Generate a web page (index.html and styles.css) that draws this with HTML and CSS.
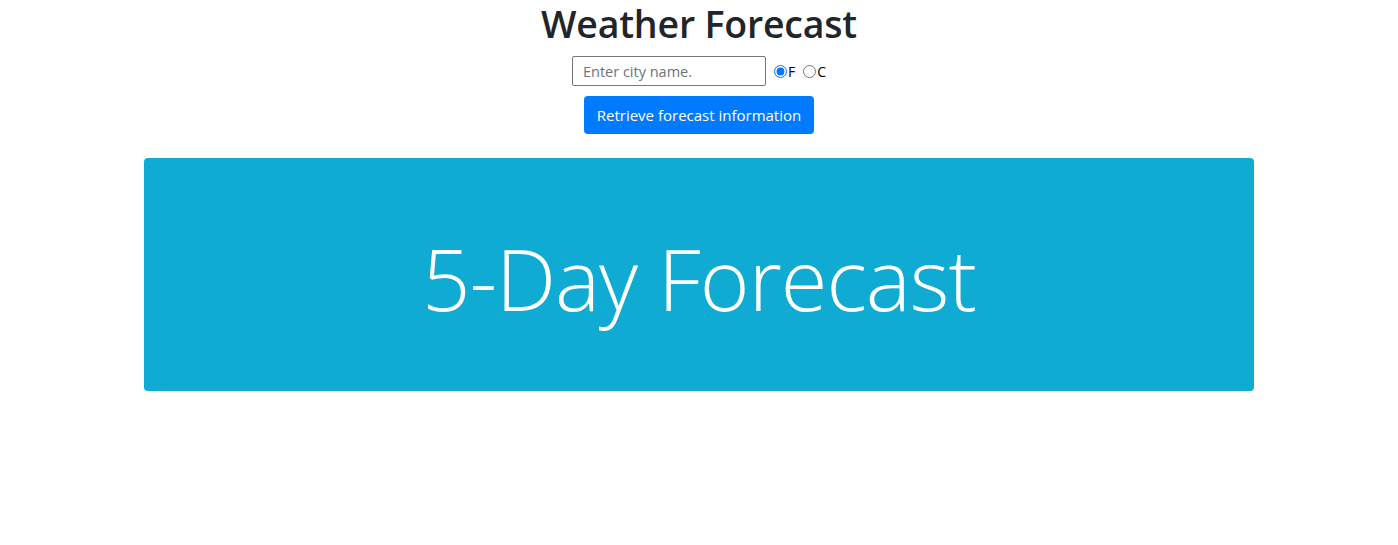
FILE: index.html
```html
<!DOCTYPE html>
<html>
<head>
<meta charset="utf-8">
<link rel="stylesheet" href="styles.css">
</head>
<body>
<div class="page">
  <h1 class="title">Weather Forecast</h1>
  <div class="form-row">
    <input class="city" type="text" placeholder="Enter city name.">
    <label class="unit"><input type="radio" name="u" checked>F</label>
    <label class="unit"><input type="radio" name="u">C</label>
  </div>
  <button class="btn">Retrieve forecast information</button>
  <div class="jumbo">
    <h2 class="display">5-Day Forecast</h2>
  </div>
</div>
</body>
</html>
```
FILE: styles.css
```css
html, body { margin: 0; padding: 0; background: #fff; }
body { font-family: "Open Sans", "Noto Sans", sans-serif; color: #212529; }
.page { display: flex; flex-direction: column; align-items: center; }
.title { margin: 0 0 8px; font-size: 37.5px; font-weight: 600; line-height: 48px; letter-spacing: -0.2px; }
.form-row { display: flex; align-items: center; height: 30px; }
.city { box-sizing: border-box; width: 194px; height: 30px; border: 1px solid #767676; border-radius: 2px; padding: 1px 10px; font-family: inherit; font-size: 14.5px; color: #495057; margin: 0 7px 0 0; }
.city::placeholder { color: #6c757d; }
.unit { display: flex; align-items: center; font-size: 14px; color: #000; margin-right: 7px; }
.unit:last-child { margin-right: 0; }
.unit input { margin: 0 1px 0 1px; width: 13px; height: 13px; }
.btn { margin-top: 10px; width: 230px; height: 38px; background: #007bff; color: #fff; border: 0; border-radius: 4px; font-family: inherit; font-size: 15px; padding: 0; }
.jumbo { margin-top: 24px; width: 1110px; height: 233px; box-sizing: border-box; background: #0fabd3; border-radius: 4px; display: flex; align-items: center; justify-content: center; }
.display { margin: 0; color: #fff; font-weight: 300; font-size: 85px; line-height: 1.2; letter-spacing: -1px; padding-top: 6px; }
```
